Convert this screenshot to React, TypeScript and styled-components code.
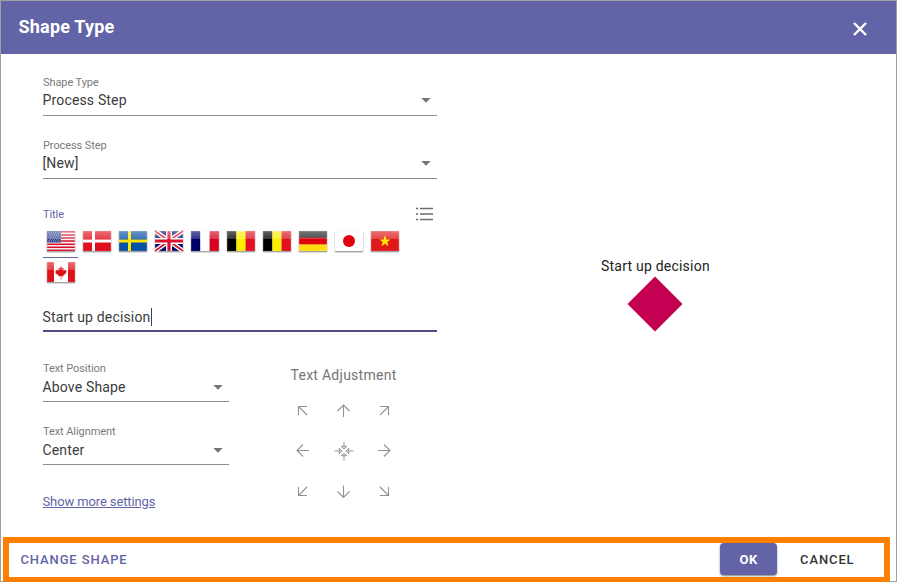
import React from "react";
import styled, { createGlobalStyle, css } from "styled-components";

const GlobalStyle = createGlobalStyle`
  * { box-sizing: border-box; }
  body { margin: 0; background: #fff; font-family: Roboto, "Liberation Sans", sans-serif; }
  button { font-family: inherit; border: 0; padding: 0; background: none; cursor: pointer; }
`;

const Dialog = styled.div`
  position: relative;
  display: flex;
  flex-direction: column;
  width: 897px;
  height: 582px;
  border: 1px solid #a0a0a0;
  background: #fff;
`;

const Header = styled.header`
  display: flex;
  justify-content: space-between;
  height: 53px;
  padding: 0 28px 0 17.5px;
  background: #6264a7;
  color: #fff;
`;

const Heading = styled.h1`
  margin: 0;
  font-size: 18px;
  font-weight: 700;
  line-height: 52px;
  letter-spacing: 0.2px;
`;

const CloseButton = styled.button`
  height: 16px;
  margin-top: 20px;
  color: #fff;
  svg { display: block; }
`;

const Body = styled.main`
  display: flex;
  flex: 1;
  padding-left: 42px;
`;

const Form = styled.section`
  display: flex;
  flex-direction: column;
  width: 394px;
  padding-top: 21px;
`;

const Field = styled.div`
  height: 63px;
`;

const FieldBox = styled.div`
  height: 41px;
  padding-top: 1px;
  border-bottom: 1px solid #8c8c8c;
`;

const Label = styled.div<{ $active?: boolean }>`
  font-size: 11px;
  line-height: 14px;
  letter-spacing: -0.08px;
  color: ${(p) => (p.$active ? "#6264a7" : "#7a7a7a")};
`;

const ValueRow = styled.div<{ $low?: boolean }>`
  display: flex;
  align-items: center;
  justify-content: space-between;
  height: ${(p) => (p.$low ? 22 : 20)}px;
  padding-right: 6px;
  font-size: 14px;
  letter-spacing: 0.16px;
  text-indent: -0.5px;
  color: #3c3c3c;
`;

const TitleRow = styled.div`
  display: flex;
  justify-content: space-between;
  height: 24px;
  padding: 7px 4px 0 0;
  svg { display: block; margin-top: -1px; }
`;

const FlagList = styled.div`
  display: flex;
  flex-wrap: wrap;
  height: 62px;
  margin-top: 2px;
`;

const FlagTab = styled.button<{ $selected?: boolean }>`
  display: flex;
  align-items: flex-start;
  width: 36px;
  height: 31px;
  padding: 3px 3.5px 0 2.5px;
  svg { display: block; }
  ${(p) =>
    p.$selected &&
    css`
      background: linear-gradient(#6264a7, #6264a7) 0 30px / 35px 1px no-repeat;
    `}
`;

const TextInput = styled.div`
  display: flex;
  align-items: center;
  height: 30px;
  margin-top: 13px;
  padding-top: 2px;
  border-bottom: 2px solid #504c8c;
  font-size: 14px;
  letter-spacing: 0.17px;
  text-indent: -0.5px;
  color: #3c3c3c;
`;

const Caret = styled.span`
  width: 1px;
  height: 18px;
  margin-left: 0.5px;
  background: #3b3a72;
`;

const Lower = styled.div`
  display: flex;
  gap: 62px;
  margin-top: 29px;
`;

const Selects = styled.div`
  width: 186px;
`;

const MoreLink = styled.a`
  display: block;
  margin: 7px 0 0 -0.5px;
  font-size: 13px;
  line-height: 16px;
  letter-spacing: -0.12px;
  color: #6264a7;
  text-decoration: underline;
`;

const Adjustment = styled.div`
  padding-top: 5px;
`;

const AdjustmentTitle = styled.div`
  font-size: 14px;
  line-height: 18px;
  letter-spacing: 0.27px;
  text-indent: -0.5px;
  white-space: nowrap;
  color: #757575;
`;

const ArrowGrid = styled.div`
  display: grid;
  grid-template-columns: repeat(3, 41px);
  grid-template-rows: repeat(3, 40.5px);
  margin: 6px 0 0 -9px;
  svg { display: block; }
`;

const ArrowButton = styled.button`
  display: flex;
  align-items: center;
  justify-content: center;
`;

const Preview = styled.section`
  display: flex;
  flex-direction: column;
  align-items: center;
  width: 108px;
  margin: 202px 0 0 164px;
  svg { display: block; }
`;

const PreviewText = styled.div`
  width: 108px;
  height: 20px;
  overflow: hidden;
  font-size: 14px;
  line-height: 20px;
  letter-spacing: 0.22px;
  white-space: nowrap;
  color: #222;
`;

const Footer = styled.footer`
  position: absolute;
  left: 2px;
  top: 536px;
  display: flex;
  align-items: flex-start;
  width: 887px;
  height: 46px;
  padding-left: 11.5px;
  border: 6px solid #ff8000;
  background: #fff;
`;

const ActionButton = styled.button<{ $kind: "link" | "primary" | "plain" }>`
  height: 32px;
  font-size: 13px;
  font-weight: 500;
  letter-spacing: 0.87px;
  color: #333;
  ${(p) => p.$kind === "link" && css`color: #6264a7; margin-right: auto;`}
  ${(p) => p.$kind === "plain" && css`margin: 0 29.5px 0 23px;`}
  ${(p) =>
    p.$kind === "primary" &&
    css`
      width: 57px;
      color: #fff;
      font-weight: 700;
      letter-spacing: 0.6px;
      background: #6264a7;
      border-radius: 4px;
      box-shadow: 0 1px 2px rgba(0, 0, 0, 0.5);
    `}
`;

type FlagCode = "us" | "dk" | "se" | "gb" | "fr" | "be" | "be2" | "de" | "jp" | "vn" | "ca";

const bars = (a: string, b: string, c: string) => (
  <>
    <rect width="9.33" height="20" fill={a} />
    <rect x="9.33" width="9.34" height="20" fill={b} />
    <rect x="18.67" width="9.33" height="20" fill={c} />
  </>
);

const cross = (field: string, line: string) => (
  <>
    <rect width="28" height="20" fill={field} />
    <path d="M0 10H28M10.5 0V20" stroke={line} strokeWidth="3" />
  </>
);

const flagArt: Record<FlagCode, React.ReactNode> = {
  us: (
    <>
      <rect width="28" height="20" fill="#f5eef0" />
      <path d="M0 .8H28M0 3.9H28M0 7H28M0 10.1H28M0 13.2H28M0 16.3H28M0 19.3H28" stroke="#d8102c" strokeWidth="1.5" />
      <rect width="14" height="11.5" fill="#2c3f8c" />
      <path d="M1.5 2H14M2.5 4H14M1.5 6H14M2.5 8H14M1.5 10H14" stroke="#c7cce5" strokeDasharray="1 1.2" />
    </>
  ),
  dk: cross("#e0101c", "#fff"),
  se: cross("#0852a5", "#ffe600"),
  gb: (
    <>
      <rect width="28" height="20" fill="#00106c" />
      <path d="M0 0L28 20M28 0L0 20" stroke="#fff" strokeWidth="4.6" />
      <path d="M0 0L28 20M28 0L0 20" stroke="#d8102c" strokeWidth="1.6" />
      <path d="M14 0V20M0 10H28" stroke="#fff" strokeWidth="6" />
      <path d="M14 0V20M0 10H28" stroke="#d8102c" strokeWidth="3.2" />
    </>
  ),
  fr: bars("#00006c", "#fff", "#d80020"),
  be: bars("#000", "#ffed00", "#e01020"),
  be2: bars("#000", "#ffed00", "#e01020"),
  de: (
    <>
      <rect width="28" height="7" fill="#222" />
      <rect y="6.7" width="28" height="7" fill="#e00010" />
      <rect y="13.4" width="28" height="6.6" fill="#ffdd10" />
    </>
  ),
  jp: (
    <>
      <rect width="28" height="20" fill="#fff" />
      <circle cx="14" cy="10" r="6" fill="#e00010" />
    </>
  ),
  vn: (
    <>
      <rect width="28" height="20" fill="#e01818" />
      <path d="M14 4.2L15.5 8.4H19.6L16.3 11L17.5 15.2L14 12.7L10.5 15.2L11.7 11L8.4 8.4H12.5Z" fill="#ffe600" />
    </>
  ),
  ca: (
    <>
      <rect width="28" height="20" fill="#fff" />
      <path d="M0 0H7V20H0ZM21 0H28V20H21Z" fill="#e01018" />
      <path d="M14 4L15.4 6.5L16.8 6L16.4 9L18 7.8L19.6 9L19 11.2L16.2 13.6L16.4 14.4L14.3 14.1V17.5H13.7V14.1L11.6 14.4L11.8 13.6L8.6 11.2L8.4 9L10 7.8L11.6 9L11.2 6L12.6 6.5Z" fill="#e01018" />
    </>
  ),
};

const Flag = ({ code }: { code: FlagCode }) => (
  <svg width="30" height="24" viewBox="-1 -1 30 24">
    <defs>
      <linearGradient id={`gloss-${code}`} x1="0" y1="0" x2="0" y2="1">
        <stop offset="0" stopColor="#fff" stopOpacity=".38" />
        <stop offset="1" stopColor="#fff" stopOpacity=".2" />
      </linearGradient>
    </defs>
    <rect x="-.6" y="-.2" width="29.2" height="22" rx="1.5" fill="#000" opacity=".1" />
    <rect x="-.2" y="0" width="28.4" height="21.2" rx="1" fill="#000" opacity=".3" />
    {flagArt[code]}
    {code !== "jp" && <rect width="28" height="8" fill={`url(#gloss-${code})`} />}
    <rect x=".5" y=".5" width="27" height="19.5" fill="none" stroke="#fff" opacity=".14" />
  </svg>
);

const DownTriangle = () => (
  <svg width="10" height="5" viewBox="0 0 10 5">
    <path d="M.3 0H9.7L5 4.8Z" fill="#757575" />
  </svg>
);

const SelectField = ({ label, value, low }: { label: string; value: string; low?: boolean }) => (
  <Field>
    <FieldBox>
      <Label>{label}</Label>
      <ValueRow $low={low}>
        <span>{value}</span>
        <DownTriangle />
      </ValueRow>
    </FieldBox>
  </Field>
);

const arrows = [
  "M5.5 14V5.5H14M5.5 5.5L14 14",
  "M9.5 16V4.5M3.5 10L9.5 4L15.5 10",
  "M5 5.5H13.5V14M13.5 5.5L5 14",
  "M16 9.5H4.5M10 3.5L4 9.5L10 15.5",
  "",
  "M3 9.5H14.5M9 3.5L15 9.5L9 15.5",
  "M5.5 5V13.5H14M5.5 13.5L14 5",
  "M9.5 3.5V15M3.5 9.5L9.5 15.5L15.5 9.5",
  "M13.5 5V13.5H5M5 5L13.5 13.5",
];

const Arrow = ({ d }: { d: string }) =>
  d ? (
    <svg width="19" height="19" viewBox="0 0 19 19" fill="none" stroke="#929292" strokeWidth="1.1">
      <path d={d} />
    </svg>
  ) : (
    <svg width="20" height="20" viewBox="0 0 21 21" fill="none" stroke="#929292" strokeWidth="1">
      <path d="M10.5 0.5V7M10.5 20.5V14M0.5 10.5H7M20.5 10.5H14" />
      <path d="M7.5 5.5H13.5L10.5 8.5ZM7.5 15.5H13.5L10.5 12.5ZM5.5 7.5V13.5L8.5 10.5ZM15.5 7.5V13.5L12.5 10.5Z" />
    </svg>
  );

const flags: FlagCode[] = ["us", "dk", "se", "gb", "fr", "be", "be2", "de", "jp", "vn", "ca"];

export default function App() {
  return (
    <>
      <GlobalStyle />
      <Dialog>
        <Header>
          <Heading>Shape Type</Heading>
          <CloseButton aria-label="Close">
            <svg width="16" height="16" viewBox="0 0 16 16">
              <path d="M2 2L14 14M14 2L2 14" stroke="#fff" strokeWidth="2.4" />
            </svg>
          </CloseButton>
        </Header>
        <Body>
          <Form>
            <SelectField label="Shape Type" value="Process Step" />
            <SelectField label="Process Step" value="[New]" />
            <TitleRow>
              <Label $active>Title</Label>
              <svg width="17" height="14" viewBox="0 0 17 14">
                <path d="M4 1.5H17M4 7H17M4 12.5H17M0 1.5H2.2M0 7H2.2M0 12.5H2.2" stroke="#6c6c6c" strokeWidth="1.6" />
              </svg>
            </TitleRow>
            <FlagList>
              {flags.map((code) => (
                <FlagTab key={code} $selected={code === "us"}>
                  <Flag code={code} />
                </FlagTab>
              ))}
            </FlagList>
            <TextInput>
              Start up decision
              <Caret />
            </TextInput>
            <Lower>
              <Selects>
                <SelectField low label="Text Position" value="Above Shape" />
                <SelectField low label="Text Alignment" value="Center" />
                <MoreLink>Show more settings</MoreLink>
              </Selects>
              <Adjustment>
                <AdjustmentTitle>Text Adjustment</AdjustmentTitle>
                <ArrowGrid>
                  {arrows.map((d, i) => (
                    <ArrowButton key={i}>
                      <Arrow d={d} />
                    </ArrowButton>
                  ))}
                </ArrowGrid>
              </Adjustment>
            </Lower>
          </Form>
          <Preview>
            <PreviewText>Start up decision</PreviewText>
            <svg width="56" height="56" viewBox="0 0 56 56">
              <path d="M28 .5L55.5 28L28 55.5L.5 28Z" fill="#c30052" />
            </svg>
          </Preview>
        </Body>
        <Footer>
          <ActionButton $kind="link">CHANGE SHAPE</ActionButton>
          <ActionButton $kind="primary">OK</ActionButton>
          <ActionButton $kind="plain">CANCEL</ActionButton>
        </Footer>
      </Dialog>
    </>
  );
}
